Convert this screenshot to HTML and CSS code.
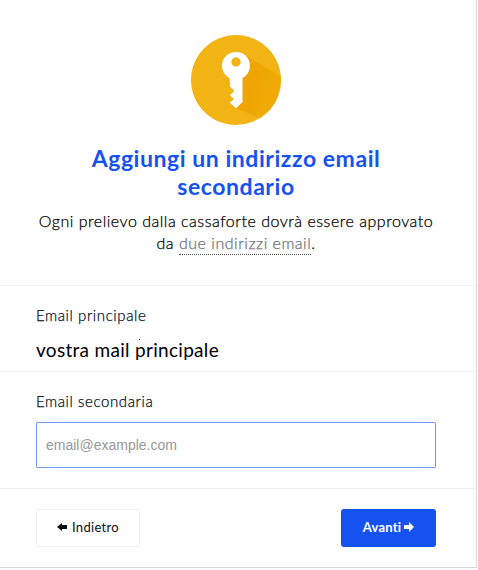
FILE: index.html
```
<!DOCTYPE html>
<html lang="it">
<head>
<meta charset="utf-8">
<title>Email secondaria</title>
<link rel="stylesheet" href="styles.css">
</head>
<body>
<div class="card">
	<div class="header">
		<svg class="key" width="90" height="90" viewBox="0 0 90 90">
			<defs>
				<clipPath id="disc"><circle cx="45" cy="45" r="45"/></clipPath>
				<linearGradient id="shade" x1="0" y1="0" x2="1" y2="0.4">
					<stop offset="0" stop-color="#efa300"/>
					<stop offset="1" stop-color="#f1ab05"/>
				</linearGradient>
			</defs>
			<circle cx="45" cy="45" r="45" fill="#f2b414"/>
			<path clip-path="url(#disc)" fill="url(#shade)" d="M53 20L95 44V95L85 90L45 73Z"/>
			<path fill="#fff" fill-rule="evenodd" d="M45 17C53 17 59 23 59 30.500C59 36 56 40.500 51.500 43V67L45 73.200L38.500 67.500L43 64.500L39 60L43.500 56L39 51.500L38.500 43C34 40.500 31 36 31 30.500C31 23 37 17 45 17ZM45 22.300a4.700 4.700 0 1 0 0 9.400a4.700 4.700 0 1 0 0-9.400Z"/>
		</svg>
		<h1>Aggiungi un indirizzo email secondario</h1>
		<p>Ogni prelievo dalla cassaforte dovrà essere approvato<br>da <span class="hint">due indirizzi email</span>.</p>
	</div>
	<div class="row primary">
		<div class="label">Email principale</div>
		<div class="value">vostra mail principale</div>
	</div>
	<div class="row secondary">
		<label class="label" for="email">Email secondaria</label>
		<input id="email" type="email" placeholder="email@example.com">
	</div>
	<div class="row footer">
		<button class="button back"><svg width="10" height="8" viewBox="0 0 10 8"><path fill="currentColor" d="M0 4L5 0V2H10V6H5V8Z"/></svg><span>Indietro</span></button>
		<button class="button next"><span>Avanti</span><svg width="10" height="10" viewBox="0 0 10 10"><path fill="currentColor" d="M10 5L5 0V3H0V7H5V10Z"/></svg></button>
	</div>
</div>
</body>
</html>
```
FILE: styles.css
```
* {
	box-sizing: border-box;
}
body {
	margin: 0;
	background: #fff;
	color: #000;
	font-family: Lato, "Liberation Sans", sans-serif;
}
.card {
	width: 477px;
	height: 568px;
	border-right: 1px solid #d8d8d8;
	border-bottom: 1px solid #d8d8d8;
}
.header {
	height: 285px;
	padding: 35px 30px 0 26px;
	text-align: center;
}
.key {
	display: block;
	margin: 0 auto;
}
h1 {
	width: 320px;
	margin: 19px auto 0;
	font-size: 23px;
	line-height: 28px;
	font-weight: 700;
	letter-spacing: 0.55px;
	color: #1652f0;
}
p {
	margin: 10px 0 0;
	font-size: 16px;
	font-weight: 300;
	line-height: 22px;
	letter-spacing: 0.52px;
	white-space: nowrap;
	-webkit-text-stroke: 0.25px;
}
.hint {
	padding-bottom: 2px;
	color: #6b7078;
	border-bottom: 1px dotted #555;
}
.row {
	border-top: 1px solid #f1f1f1;
	padding: 0 40px 0 36px;
}
.primary {
	height: 86px;
	padding-top: 19px;
}
.label {
	display: block;
	font-size: 15px;
	font-weight: 300;
	line-height: 20px;
	letter-spacing: 0.6px;
	color: #050f19;
	-webkit-text-stroke: 0.25px;
}
.value {
	position: relative;
	margin-top: 13px;
	font-size: 19px;
	line-height: 24px;
	letter-spacing: 0.3px;
}
.value::after {
	content: "";
	position: absolute;
	left: 103px;
	top: 1px;
	width: 1px;
	height: 1px;
	background: #000;
}
.secondary {
	height: 117px;
	padding-top: 19px;
}
input {
	display: block;
	width: 400px;
	height: 46px;
	margin-top: 11px;
	padding: 0 9px;
	border: 1px solid #7399f6;
	border-radius: 1px;
	font: 14px "Liberation Sans", sans-serif;
}
input::placeholder {
	color: #999;
}
.footer {
	display: flex;
	justify-content: space-between;
	padding-top: 20px;
}
.button {
	display: flex;
	align-items: center;
	justify-content: center;
	height: 38px;
	padding: 0 0 2px;
	border-radius: 3px;
	font-family: inherit;
	font-size: 13px;
}
.back {
	width: 104px;
	gap: 5px;
	border: 1px solid #f1f1f1;
	background: #fff;
	color: #050f19;
	letter-spacing: 0.3px;
}
.next {
	width: 95px;
	gap: 3px;
	border: 0;
	background: #1652f0;
	color: #fff;
	font-weight: 700;
	letter-spacing: 0.2px;
}
```
